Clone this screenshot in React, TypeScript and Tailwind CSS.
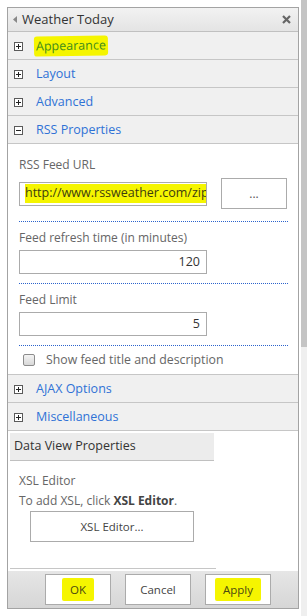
import React from "react";

const font = { fontFamily: '"Open Sans", "Noto Sans", Arial, sans-serif' };

const PlusBox = ({ minus }: { minus?: boolean }) => (
  <span className="flex h-[9px] w-[9px] items-center justify-center border border-[#5a5a5a] bg-white">
    <svg width="7" height="7" viewBox="0 0 7 7">
      <rect x="1" y="3" width="5" height="1" fill="#222" />
      {!minus && <rect x="3" y="1" width="1" height="5" fill="#222" />}
    </svg>
  </span>
);

const Section = ({
  label,
  minus,
  highlight,
}: {
  label: string;
  minus?: boolean;
  highlight?: boolean;
}) => (
  <div className="flex h-[28px] items-center border-b border-[#c6c6c6] bg-[#f0f0f0] pl-[6px] pt-[1px]">
    <PlusBox minus={minus} />
    {highlight ? (
      <span className="ml-[11px] rounded-[3px] bg-[#f5f500] px-[2px] text-[12.5px] leading-[20px] text-[#3f8c1c] -rotate-1">
        Appearance
      </span>
    ) : (
      <span className="ml-[13px] text-[12.5px] text-[#2f72d6]">{label}</span>
    )}
  </div>
);

const Dotted = () => <div className="mr-[10px] border-b border-dotted border-[#2c63cc]" />;

const Field = ({ label, value }: { label: string; value: string }) => (
  <div className="pt-[7px]">
    <div className="text-[12px] leading-[18px] text-[#666]">{label}</div>
    <div className="mt-[3px] flex h-[24px] w-[188px] items-center justify-end border border-[#ababab] bg-white pr-[6px] text-[12.5px] text-[#333]">
      {value}
    </div>
    <div className="mt-[9px]">
      <Dotted />
    </div>
  </div>
);

const FooterButton = ({ label, highlight }: { label: string; highlight?: boolean }) => (
  <div className="flex h-[31px] w-[66px] items-center justify-center border border-[#ababab] bg-white text-[11.5px] text-[#444]">
    {highlight ? (
      <span className="rounded-[2px] bg-[#f5f500] px-[8px] py-[3px] text-[#4a4a10]">{label}</span>
    ) : (
      label
    )}
  </div>
);

export default function App() {
  return (
    <div className="flex h-[616px] w-[307px] overflow-hidden bg-white" style={font}>
      <div className="ml-[7px] mt-[7px] flex h-[602px] w-[292px] flex-col border border-[#a3a3a3] bg-white">
        {/* title bar */}
        <div className="flex h-[24px] items-center border-b border-[#c0c0c0] bg-gradient-to-b from-[#f2f2f2] to-[#e4e4e4] pl-[5px] pr-[7px]">
          <svg width="5" height="7" viewBox="0 0 5 7">
            <path d="M4 0 L0 3.5 L4 7 Z" fill="#888" />
          </svg>
          <span className="ml-[4px] flex-1 text-[13px] text-[#333]">Weather Today</span>
          <svg width="9" height="9" viewBox="0 0 9 9">
            <path d="M1 1 L8 8 M8 1 L1 8" stroke="#666" strokeWidth="2.2" />
          </svg>
        </div>

        <Section label="Appearance" highlight />
        <Section label="Layout" />
        <Section label="Advanced" />
        <Section label="RSS Properties" minus />

        {/* RSS content */}
        <div className="border-b border-[#c6c6c6] pb-[5px] pl-[11px]">
          <div className="pt-[12px] text-[12px] leading-[18px] text-[#666]">RSS Feed URL</div>
          <div className="mt-[4px] flex items-center">
            <div className="flex h-[24px] w-[188px] items-center overflow-hidden whitespace-nowrap border border-[#ababab] bg-white pl-[5px] text-[12.5px]">
              <span className="bg-[#f5f500] text-[#3c3c10]">http://www.rssweather.com/zip</span>
            </div>
            <div className="ml-[14px] flex h-[31px] w-[66px] items-center justify-center border border-[#ababab] bg-white text-[12px] text-[#555]">
              ...
            </div>
          </div>
          <div className="mt-[12px]">
            <Dotted />
          </div>
          <Field label="Feed refresh time (in minutes)" value="120" />
          <Field label="Feed Limit" value="5" />
          <div className="mt-[5px] flex items-center pl-[4px]">
            <span className="h-[12px] w-[12px] rounded-[2px] border border-[#8c8c8c] bg-gradient-to-b from-[#f4f4f4] to-[#d8d8d8]" />
            <span className="ml-[11px] text-[12.3px] leading-[18px] text-[#666]">Show feed title and description</span>
          </div>
        </div>

        <Section label="AJAX Options" />
        <Section label="Miscellaneous" />

        {/* data view */}
        <div className="flex flex-1 flex-col pl-[2px]">
          <div className="mt-[2px] flex h-[28px] w-[204px] items-center border-b border-[#c0c0c0] bg-[#ececec] pl-[4px] text-[12.5px] text-[#333]">
            Data View Properties
          </div>
          <div className="pl-[9px] pt-[10px] text-[12px] leading-[20px] text-[#666]">
            <div>XSL Editor</div>
            <div>
              To add XSL, click <b className="text-[#444]">XSL Editor</b>.
            </div>
            <div className="ml-[11px] flex h-[31px] w-[164px] items-center justify-center border border-[#ababab] bg-white text-[11.5px] text-[#444]">
              XSL Editor...
            </div>
          </div>
          <div className="flex-1" />
          <div className="mb-[2px] w-[206px] border-b border-[#c6c6c6]" />
        </div>

        {/* footer */}
        <div className="flex h-[37px] items-center gap-[14px] bg-gradient-to-b from-[#e6e6e6] to-[#d6d6d6] pl-[37px]">
          <FooterButton label="OK" highlight />
          <FooterButton label="Cancel" />
          <FooterButton label="Apply" highlight />
        </div>
      </div>

      {/* scrollbar */}
      <div className="ml-[2px] flex w-[6px] flex-col">
        <div className="h-[347px] bg-[#c4c4c4]" />
        <div className="flex-1 bg-[#efefef]" />
      </div>
    </div>
  );
}
